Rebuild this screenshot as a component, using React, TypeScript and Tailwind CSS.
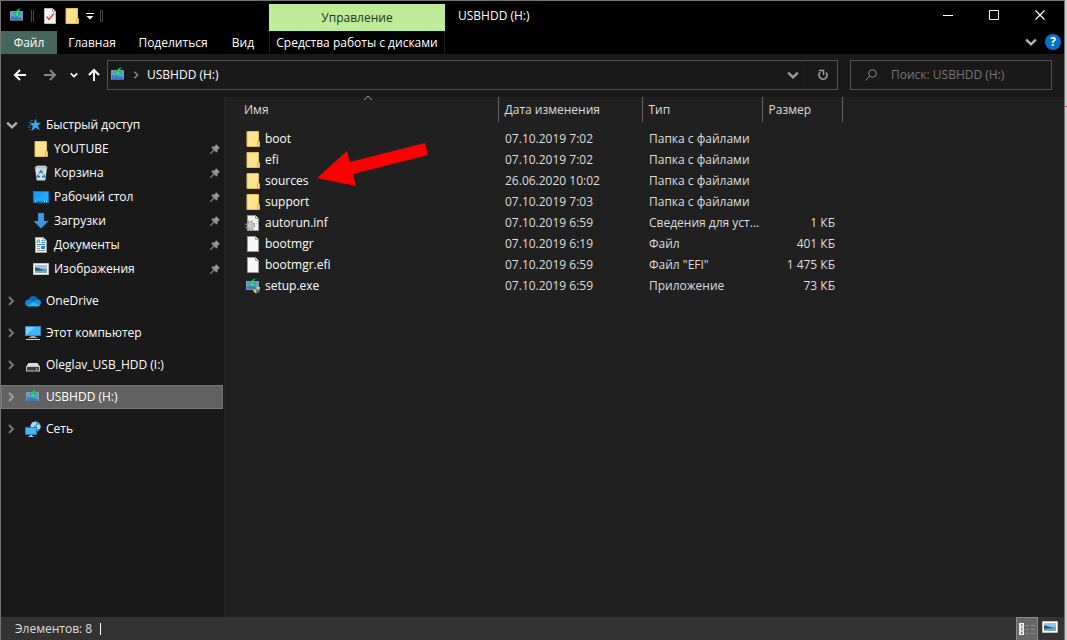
import type { ReactNode } from "react";

type IconProps = { className?: string };

function Svg({ children, className = "size-4", box = 16 }: { children: ReactNode; className?: string; box?: number }) {
  return (
    <svg viewBox={`0 0 ${box} ${box}`} className={`shrink-0 ${className}`} fill="none" aria-hidden="true">
      {children}
    </svg>
  );
}

function DriveInstallIcon({ className }: IconProps) {
  return (
    <Svg className={className}>
      <rect x="1.5" y="3.5" width="12" height="9" fill="#5d9fe6" stroke="#8496ae" />
      <path d="M2 12V8l11 2v2z" fill="#3f78c4" />
      <path d="M1 12.5h13" stroke="#56677c" />
      <path d="M11.5 .8C9 .8 7 2.500 6.800 5H4.500L8 9.300 11.500 5H9.200c.1-1.600.9-3 2.300-4.200z" fill="#2fe06a" stroke="#118a3e" strokeWidth=".5" />
    </Svg>
  );
}

function SetupIcon({ className }: IconProps) {
  return (
    <Svg className={className}>
      <rect x="1.500" y="3.500" width="12" height="8" fill="#5d9fe6" stroke="#8496ae" />
      <path d="M2 11V8l11 1v2z" fill="#3f78c4" />
      <path d="M10.500 .8C8 .8 6 2.500 5.800 5H3.500L7 9.300 10.500 5H8.200c.1-1.600.9-3 2.300-4.200z" fill="#2fe06a" stroke="#118a3e" strokeWidth=".5" />
      <path d="M11.500 8v3.500H8V9c1.500 0 2.500-.3 3.500-1z" fill="#2f7de0" />
      <path d="M11.500 8v3.500H15V9c-1.500 0-2.500-.3-3.500-1z" fill="#f6c636" />
      <path d="M8 11.500c0 2 1.500 3.300 3.500 4v-4z" fill="#f6c636" />
      <path d="M15 11.500c0 2-1.500 3.300-3.500 4v-4z" fill="#2f7de0" />
    </Svg>
  );
}

function FolderIcon({ className }: IconProps) {
  return (
    <Svg className={className}>
      <path d="M2 .5h11.500v15H2z" fill="#ffe391" stroke="#e9bf4c" />
      <path d="M12.500 10.500h2v5h-2z" fill="#ffe391" stroke="#e0b23c" />
    </Svg>
  );
}

function CheckPageIcon({ className }: IconProps) {
  return (
    <Svg className={className}>
      <path d="M2.500.5h8l3 3v12h-11z" fill="#f6f6f6" stroke="#b8b8b8" />
      <path d="M10.500.5v3h3" stroke="#a0a0a0" />
      <path d="M4.500 8.500l2.500 3 5-6" stroke="#e3562b" strokeWidth="1.600" />
    </Svg>
  );
}

function FileIcon({ className }: IconProps) {
  return (
    <Svg className={className}>
      <path d="M2.500.5h8l3 3v12h-11z" fill="#f7f7f7" stroke="#9c9c9c" />
      <path d="M10.500.5v3h3" fill="#dcdcdc" stroke="#9c9c9c" />
    </Svg>
  );
}

function ConfigIcon({ className }: IconProps) {
  return (
    <Svg className={className}>
      <path d="M2.500.5h8l3 3v12h-11z" fill="#f2f2f2" stroke="#9c9c9c" />
      <path d="M10.500.5v3h3" fill="#dcdcdc" stroke="#9c9c9c" />
      <circle cx="5.200" cy="10.500" r="4.300" stroke="#8d8d8d" strokeWidth="1.500" strokeDasharray="1.700 1.680" />
      <circle cx="5.200" cy="10.500" r="3" fill="#dedede" stroke="#9a9a9a" />
      <circle cx="5.200" cy="10.500" r="1.200" fill="#fafafa" stroke="#808080" strokeWidth=".6" />
    </Svg>
  );
}

function StarIcon({ className }: IconProps) {
  return (
    <Svg className={className}>
      <path d="M9.500 1.500l1.400 4.200 4.300.1-3.400 2.700 2 4.800-4-2.500-4.300 3.200 1.300-5-3-2.800 4.200-.3z" fill="#36a9f2" />
      <path d="M4 3.500h3.500M2.500 5.500h3M2 8.500h3.500M1.500 10.500h3.500M3 12.500h2.500" stroke="#1c6ca8" strokeWidth=".8" />
    </Svg>
  );
}

function BinIcon({ className }: IconProps) {
  return (
    <Svg className={className}>
      <path d="M2 2.500h12l-1.700 13H3.700z" fill="#d9dcde" />
      <path d="M1.500 2.200l3-1.700h8l2 1.700v1h-13z" fill="#9da2a6" />
      <path d="M3 1.800h10" stroke="#eef0f1" />
      <path d="M6.200 8.200L8 5.800l1.800 2.400M10.600 9.500l1 2.200H9M7 11.700H4.400l1-2.200" stroke="#1c7fc9" strokeWidth="1.500" />
    </Svg>
  );
}

function DesktopIcon({ className }: IconProps) {
  return (
    <Svg className={className}>
      <rect x=".5" y="2.500" width="15" height="11" fill="#14a0fa" stroke="#0a78c6" />
      <path d="M1 12L12 3h3v9z" fill="#35b0ff" opacity=".5" />
      <path d="M1 12.500h14" stroke="#0870bb" />
      <path d="M2 12.500h1M11 12.500h1M13 12.500h1" stroke="#fff" />
    </Svg>
  );
}

function DownloadIcon({ className }: IconProps) {
  return (
    <Svg className={className}>
      <path d="M5 0h6v8h4.500L8 15.500.5 8H5z" fill="#3b97e8" />
    </Svg>
  );
}

function DocumentIcon({ className }: IconProps) {
  return (
    <Svg className={className}>
      <path d="M2.500.5h8l3 3v12h-11z" fill="#f7f7f7" stroke="#a2a2a2" />
      <path d="M10.500.5v3h3" stroke="#a0a0a0" />
      <path d="M4 6l1.500-3.500L7 6M8.500 3.500H10M8.500 5.500h3.500M4 7.500h8" stroke="#2386cf" />
      <path d="M4 9.500h3M4 11.500h3M4 13.500h8" stroke="#8f9ba4" />
      <path d="M8 9h4v3H8z" fill="#3d7fae" />
    </Svg>
  );
}

function PictureIcon({ className }: IconProps) {
  return (
    <Svg className={className}>
      <path d="M.5 2.500h15v11H.5z" fill="#fff" stroke="#c2c2c2" />
      <path d="M2 4h12v8H2z" fill="#8fc4f2" />
      <path d="M2 6.500c4 0 7 3 12 2V10H2z" fill="#32596a" />
      <path d="M2 10l12-1v3H2z" fill="#86a5b4" />
    </Svg>
  );
}

function CloudIcon({ className }: IconProps) {
  return (
    <Svg className={className}>
      <path d="M3.500 7C4.500 4 7 2.500 9.500 3.200c1.600.4 2.600 1.500 3.200 2.800L9 9z" fill="#0a66bd" />
      <path d="M3.500 6.500C1 6.800 0 8.500 0 10c0 1.300.6 2.300 1.500 2.900L9 9 5.500 6.800z" fill="#1080d8" />
      <path d="M12.500 6c2 .3 3.500 1.800 3.500 3.800 0 1-.4 1.700-.8 2.200L8.500 8.500z" fill="#1490df" />
      <path d="M1.500 12.900L8.500 8.500l6.800 3.500c-.6.9-1.500 1.500-2.800 1.500h-9c-.8 0-1.500-.2-2-.6z" fill="#2fb0f2" />
    </Svg>
  );
}

function ComputerIcon({ className }: IconProps) {
  return (
    <Svg className={className}>
      <rect x=".5" y="1.500" width="15" height="9" fill="#3fb4fb" stroke="#3d88b8" />
      <path d="M1 10V2h9z" fill="#7bcdfd" />
      <path d="M6 11.500h4M4 12.500h8" stroke="#a7b2ba" />
      <path d="M1 14.500h14" stroke="#cdd4d9" />
    </Svg>
  );
}

function DriveIcon({ className }: IconProps) {
  return (
    <Svg className={className}>
      <path d="M3.500 6h9L15 10H1z" fill="#dedede" />
      <rect x="1.500" y="9.500" width="13" height="4.500" fill="#3c3c3c" stroke="#c5c5c5" />
      <path d="M11 12h1.500" stroke="#35e04b" strokeWidth="1.500" />
    </Svg>
  );
}

function NetworkIcon({ className }: IconProps) {
  return (
    <Svg className={className}>
      <circle cx="10.500" cy="5.500" r="5.200" fill="#4c9bbd" />
      <path d="M7 2c2-1.700 4-1.500 4.500 0S9 4 9 6 6 6 5.500 5zM12 4c1.500-1 3 0 3.500 1.500S13 9 12.500 8s-1.500-3-.5-4z" fill="#b3dbe8" />
      <rect x=".5" y="6.500" width="11" height="7" fill="#45b6fb" stroke="#2a7db3" />
      <path d="M5 14.500h2M3.500 15.500h5" stroke="#b9c3ca" />
    </Svg>
  );
}

function PinIcon({ className }: IconProps) {
  return (
    <Svg className={className} box={10}>
      <path d="M6 0l4 4-1.200.6L7.600 5.500 7.500 8l-1 .6L4.200 6.500 1 9.800.2 9.800V9L3.500 5.800 1.400 3.500l.6-1 2.500-.1L5.500 1.200z" fill="#8e979d" />
    </Svg>
  );
}

function Chevron({ dir = "down", className = "size-2", weight = 2 }: { dir?: "down" | "right" | "up"; className?: string; weight?: number }) {
  const paths = { down: "M1 3l4 4 4-4", right: "M3 1l4 4-4 4", up: "M1 7l4-4 4 4" };
  return (
    <Svg className={className} box={10}>
      <path d={paths[dir]} stroke="currentColor" strokeWidth={weight} />
    </Svg>
  );
}

function Arrow({ dir, className = "size-4" }: { dir: "left" | "right" | "up"; className?: string }) {
  const paths = {
    left: "M14 8H3M8 3L3 8l5 5",
    right: "M2 8h11M8 3l5 5-5 5",
    up: "M8 14V3M3 8l5-5 5 5",
  };
  return (
    <Svg className={className}>
      <path d={paths[dir]} stroke="currentColor" strokeWidth="2" />
    </Svg>
  );
}

const quickAccess = [
  { label: "YOUTUBE", Icon: FolderIcon },
  { label: "Корзина", Icon: BinIcon },
  { label: "Рабочий стол", Icon: DesktopIcon },
  { label: "Загрузки", Icon: DownloadIcon },
  { label: "Документы", Icon: DocumentIcon },
  { label: "Изображения", Icon: PictureIcon },
];

const roots = [
  { label: "OneDrive", Icon: CloudIcon, active: false },
  { label: "Этот компьютер", Icon: ComputerIcon, active: false },
  { label: "Oleglav_USB_HDD (I:)", Icon: DriveIcon, active: false },
  { label: "USBHDD (H:)", Icon: DriveInstallIcon, active: true },
  { label: "Сеть", Icon: NetworkIcon, active: false },
];

const files = [
  { name: "boot", date: "07.10.2019 7:02", type: "Папка с файлами", size: "", Icon: FolderIcon },
  { name: "efi", date: "07.10.2019 7:02", type: "Папка с файлами", size: "", Icon: FolderIcon },
  { name: "sources", date: "26.06.2020 10:02", type: "Папка с файлами", size: "", Icon: FolderIcon },
  { name: "support", date: "07.10.2019 7:03", type: "Папка с файлами", size: "", Icon: FolderIcon },
  { name: "autorun.inf", date: "07.10.2019 6:59", type: "Сведения для уст...", size: "1 КБ", Icon: ConfigIcon },
  { name: "bootmgr", date: "07.10.2019 6:19", type: "Файл", size: "401 КБ", Icon: FileIcon },
  { name: "bootmgr.efi", date: "07.10.2019 6:59", type: "Файл \"EFI\"", size: "1 475 КБ", Icon: FileIcon },
  { name: "setup.exe", date: "07.10.2019 6:59", type: "Приложение", size: "73 КБ", Icon: SetupIcon },
];

function Separator() {
  return <span className="h-3 w-[3px] border-x border-[#4a4a4a]" />;
}

function TitleBar() {
  return (
    <header className="flex h-[53px] shrink-0 bg-black">
      <div className="flex w-[268px] shrink-0 flex-col">
        <div className="flex h-[30px] items-center pl-2">
          <DriveInstallIcon />
          <span className="w-1.5" />
          <Separator />
          <button aria-label="Свойства" className="ml-2 flex"><CheckPageIcon /></button>
          <button aria-label="Новая папка" className="ml-1.5 flex"><FolderIcon /></button>
          <button aria-label="Настройка панели" className="mx-1.5 flex">
            <Svg className="size-2" box={8}>
              <path d="M0 1.500h8" stroke="#fff" />
              <path d="M.5 4h7L4 7.500z" fill="#fff" />
            </Svg>
          </button>
          <Separator />
        </div>
        <nav className="flex h-[23px] items-stretch">
          <button className="w-14 bg-[#45665c] text-center">Файл</button>
          <button className="w-[70px] text-center">Главная</button>
          <button className="w-[92px] text-center">Поделиться</button>
          <button className="w-12 text-center">Вид</button>
        </nav>
      </div>
      <div className="flex w-44 shrink-0 flex-col pt-[3px]">
        <div className="flex h-[27px] items-center justify-center bg-[#bdec98] text-[#26331c]">Управление</div>
        <button className="flex-1 border-x border-[#1c1c1c] text-center whitespace-nowrap">Средства работы с дисками</button>
      </div>
      <h1 className="flex h-[30px] flex-1 items-center pl-[13px]">USBHDD (H:)</h1>
      <div className="flex shrink-0 flex-col">
        <div className="flex h-7 pr-px">
          <button aria-label="Свернуть" className="flex w-[46px] items-center justify-center">
            <Svg className="size-2.5" box={10}><path d="M0 5.500h10" stroke="#fff" /></Svg>
          </button>
          <button aria-label="Развернуть" className="flex w-[46px] items-center justify-center">
            <Svg className="size-2.5" box={10}><path d="M.5.5h9v9h-9z" stroke="#fff" /></Svg>
          </button>
          <button aria-label="Закрыть" className="flex w-[46px] items-center justify-center">
            <Svg className="size-2.5" box={10}><path d="M.5.5l9 9M9.500.5l-9 9" stroke="#fff" strokeWidth="1.200" /></Svg>
          </button>
        </div>
        <div className="flex flex-1 items-center justify-end gap-2 pr-[3px]">
          <button aria-label="Развернуть ленту" className="flex text-[#b5b5b5]"><Chevron className="size-3" /></button>
          <button aria-label="Справка" className="flex size-4 items-center justify-center rounded-full bg-[#0a6fd0] font-bold">?</button>
        </div>
      </div>
    </header>
  );
}

function AddressBar() {
  return (
    <div className="flex h-[43px] shrink-0 items-start bg-[#191919] pt-1.5 pr-3">
      <div className="flex h-[30px] items-center pl-[11px]">
        <button aria-label="Назад" className="flex"><Arrow dir="left" /></button>
        <button aria-label="Вперёд" className="ml-3.5 flex text-[#858585]"><Arrow dir="right" /></button>
        <button aria-label="Последние расположения" className="ml-3 flex"><Chevron className="size-2" /></button>
        <button aria-label="Вверх" className="ml-2 flex"><Arrow dir="up" /></button>
      </div>
      <div className="ml-[5px] flex h-[30px] flex-1 items-center border border-[#535353] pl-0.5">
        <DriveInstallIcon />
        <span className="ml-1.5 flex text-[#8a8a8a]"><Chevron dir="right" /></span>
        <span className="ml-[7px] flex-1">USBHDD (H:)</span>
        <button aria-label="Предыдущие расположения" className="mr-2 flex text-[#9a9a9a]"><Chevron className="size-3" /></button>
        <button aria-label="Обновить" className="flex h-full w-[30px] items-center justify-center border-l border-[#141414] text-[#9a9a9a]">
          <Svg className="size-3" box={12}>
            <path d="M3.200 3.300A4 4 0 1 0 9 3.500" stroke="currentColor" strokeWidth="1.800" />
            <path d="M2 1.500h4.500V6" stroke="currentColor" strokeWidth="1.500" />
          </Svg>
        </button>
      </div>
      <label className="ml-3 flex h-[30px] w-[202px] items-center border border-[#535353] pl-3.5">
        <Svg className="size-3 text-[#8a8a8a]" box={12}>
          <circle cx="7.500" cy="4.500" r="3.800" stroke="currentColor" />
          <path d="M4.800 7.200L.5 11.500" stroke="currentColor" />
        </Svg>
        <input aria-label="Поиск" placeholder="Поиск: USBHDD (H:)" className="ml-3.5 w-full min-w-0 bg-transparent outline-none placeholder:text-[#777777]" />
      </label>
    </div>
  );
}

function Sidebar() {
  return (
    <nav className="w-[225px] shrink-0 border-r-2 border-[#242424] bg-[#191919] pt-4">
      <a href="#quick" className="flex h-6 items-center pl-[5px]">
        <span className="flex text-[#b0b0b0]"><Chevron className="size-3" /></span>
        <StarIcon className="ml-2 size-4" />
        <span className="ml-1">Быстрый доступ</span>
      </a>
      <ul>
        {quickAccess.map(({ label, Icon }) => (
          <li key={label}>
            <a href="#folder" className="flex h-6 items-center pr-1 pl-8">
              <Icon />
              <span className="ml-[5px] flex-1">{label}</span>
              <PinIcon className="size-2.5" />
            </a>
          </li>
        ))}
      </ul>
      <ul className="mt-2 flex flex-col gap-2">
        {roots.map(({ label, Icon, active }) => (
          <li key={label}>
            <a
              href="#root"
              className={
                active
                  ? "mr-px flex h-6 items-center border border-[#777777] bg-[#626262] pl-1 text-[#a0a0a0]"
                  : "flex h-6 items-center pl-[5px] text-[#7a7a7a]"
              }
            >
              <Chevron dir="right" className="size-2.5" />
              <Icon className="ml-[9px] size-4" />
              <span className="ml-[5px] text-white">{label}</span>
            </a>
          </li>
        ))}
      </ul>
    </nav>
  );
}

function FileList() {
  return (
    <main className="relative min-w-0 flex-1 bg-[#202020]">
      <table className="w-[616px] table-fixed border-collapse text-left text-[#dedede]">
        <colgroup>
          <col className="w-[272px]" />
          <col className="w-36" />
          <col className="w-[120px]" />
          <col className="w-20" />
        </colgroup>
        <thead>
          <tr className="h-[25px]">
            <th className="relative border-r border-[#636363] pl-[18px] font-normal">
              Имя
              <span className="absolute -top-1 left-[137px] text-[#9a9a9a]"><Chevron dir="up" className="size-2.5" weight={1} /></span>
            </th>
            <th className="border-r border-[#636363] pl-1.5 font-normal">Дата изменения</th>
            <th className="border-r border-[#636363] pl-1.5 font-normal">Тип</th>
            <th className="border-r border-[#636363] pl-1.5 font-normal">Размер</th>
          </tr>
        </thead>
        <tbody>
          <tr className="h-1.5"><td colSpan={4} /></tr>
          {files.map(({ name, date, type, size, Icon }) => (
            <tr key={name} className="h-[21px]">
              <td className="p-0 pl-[19px]">
                <span className="flex items-center gap-1 text-white">
                  <Icon />
                  {name}
                </span>
              </td>
              <td className="p-0 pl-[7px]">{date}</td>
              <td className="p-0 pl-[7px] whitespace-nowrap">{type}</td>
              <td className="p-0 pr-[7px] text-right">{size}</td>
            </tr>
          ))}
        </tbody>
      </table>
      <svg viewBox="0 0 112 44" className="absolute top-[46px] left-[91px] h-11 w-28" aria-hidden="true">
        <path d="M0 35L30 8l3 11 75-19 3 12-75 19 3 12z" fill="#ff0000" />
      </svg>
    </main>
  );
}

function StatusBar() {
  return (
    <footer className="flex h-[23px] shrink-0 items-center bg-[#333333] pl-3.5 text-[#dedede]">
      <span>Элементов: 8</span>
      <span className="ml-2 h-3 w-px bg-white" />
      <button aria-label="Таблица" className="ml-auto flex h-full w-[22px] items-center justify-center border border-b-0 border-[#8a8a8a] bg-[#666666]">
        <Svg className="size-4">
          <path d="M0 2h5v12H0z" fill="#f2f2f2" />
          <path d="M0 6h5M0 10h5" stroke="#aaa" strokeWidth=".6" />
          <path d="M2 4h1.500M2 8h1.500" stroke="#2b6da8" strokeWidth="1.300" />
          <path d="M2 12h1.500" stroke="#c02020" strokeWidth="1.300" />
          <path d="M6 4.500h4M12 4.500h4M6 8.500h4M12 8.500h4M6 12.500h4M12 12.500h4" stroke="#8c8c8c" />
        </Svg>
      </button>
      <button aria-label="Крупные значки" className="mr-1.5 ml-1 flex h-full pt-0.5"><PictureIcon /></button>
    </footer>
  );
}

export default function App() {
  return (
    <div className="flex h-screen bg-[#c9c9c9] font-['Open_Sans','Noto_Sans',sans-serif] text-xs leading-4 text-white">
      <div className="flex min-w-0 flex-1 flex-col border-t border-r border-l border-[#747474]">
        <TitleBar />
        <AddressBar />
        <div className="flex min-h-0 flex-1">
          <Sidebar />
          <FileList />
        </div>
        <StatusBar />
      </div>
      <div className="w-0.5 shrink-0 pt-[106px]">
        <div className="h-px bg-[#d9452b]" />
      </div>
    </div>
  );
}
